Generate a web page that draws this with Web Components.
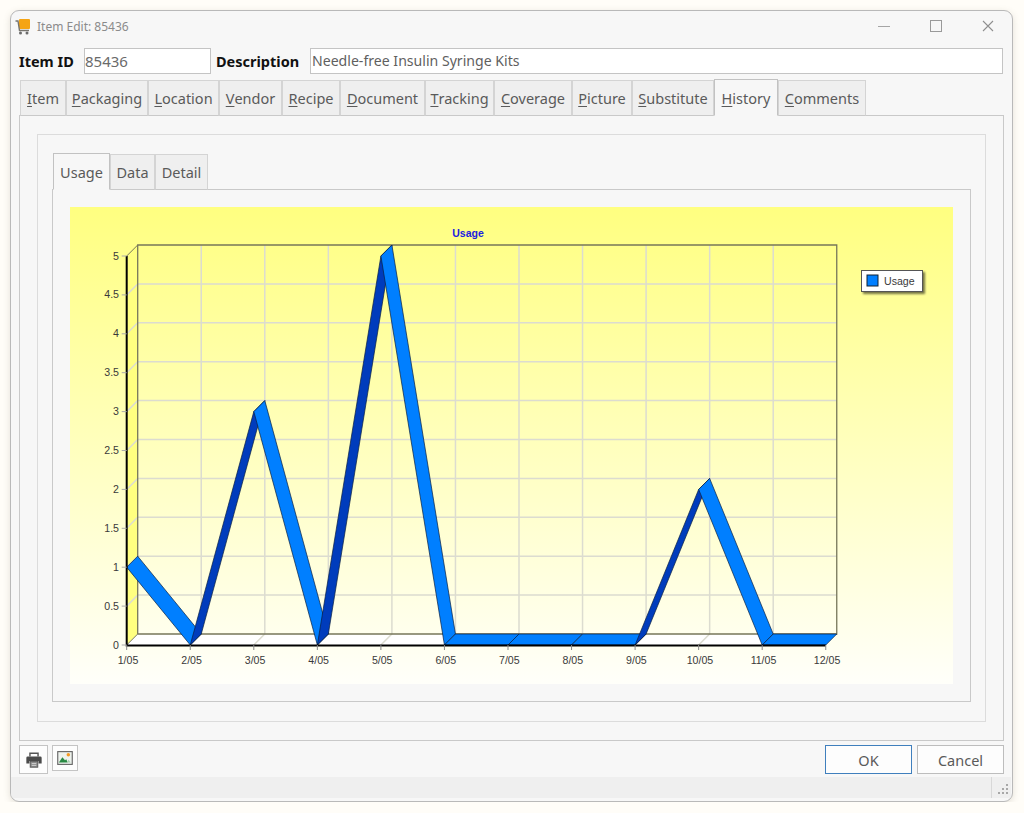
<!DOCTYPE html>
<html>
<head>
<meta charset="utf-8">
<title>Item Edit: 85436</title>
<style>
	html,body{ margin:0; background:#fffdf8; }
	body{ padding:10px 0 0 10px; font-family:"Noto Sans","Open Sans",sans-serif; }
	u{ text-underline-offset:2px; text-decoration-thickness:1px; }
</style>
</head>
<body>
<item-window>
	<win-titlebar slot="title">Item Edit: 85436</win-titlebar>

	<item-header id-value="85436" desc="Needle-free Insulin Syringe Kits"></item-header>

	<tab-strip style="--ml:1px">
		<tab-item style="--w:46px"><u>I</u>tem</tab-item>
		<tab-item style="--w:82px"><u>P</u>ackaging</tab-item>
		<tab-item style="--w:71px"><u>L</u>ocation</tab-item>
		<tab-item style="--w:63px"><u>V</u>endor</tab-item>
		<tab-item style="--w:58px"><u>R</u>ecipe</tab-item>
		<tab-item style="--w:85px"><u>D</u>ocument</tab-item>
		<tab-item style="--w:69px"><u>T</u>racking</tab-item>
		<tab-item style="--w:78px"><u>C</u>overage</tab-item>
		<tab-item style="--w:60px"><u>P</u>icture</tab-item>
		<tab-item style="--w:82px"><u>S</u>ubstitute</tab-item>
		<tab-item style="--w:64px" active><u>H</u>istory</tab-item>
		<tab-item style="--w:88px"><u>C</u>omments</tab-item>
	</tab-strip>
	<tab-panel style="--pad:18px 17px; --h:626px; --bc:#c9c9c9">
		<group-box>
			<tab-strip style="--ml:1px">
				<tab-item style="--w:57px" active>Usage</tab-item>
				<tab-item style="--w:45px">Data</tab-item>
				<tab-item style="--w:53px">Detail</tab-item>
			</tab-strip>
			<tab-panel style="--pad:17px; --h:513px; --bc:#c9c9c9">
				<usage-chart></usage-chart>
			</tab-panel>
		</group-box>
	</tab-panel>

	<button-bar>
		<tool-button slot="tools" style="--w:29px;--h:29px">
			<svg width="18" height="18" viewBox="0 0 20 20">
				<path d="M5.500 6V2.500h9V6" fill="none" stroke="#555" stroke-width="1.600"/>
				<path d="M3 6h14a1.500 1.500 0 0 1 1.500 1.500V14H15v-3H5v3H1.500V7.500A1.500 1.500 0 0 1 3 6z" fill="#4a4a4a"/>
				<rect x="5.800" y="11.500" width="8.400" height="6.500" fill="#8c8c8c" stroke="#555" stroke-width="1"/>
				<path d="M7.500 14h5M7.500 16h5" stroke="#d8d8d8" stroke-width="1"/>
			</svg>
		</tool-button>
		<tool-button slot="tools" style="--w:26px;--h:26px">
			<svg width="16" height="14" viewBox="0 0 18 16">
				<rect x="0.700" y="0.700" width="16.600" height="14.600" fill="#eef3ee" stroke="#666" stroke-width="1.300"/>
				<circle cx="12.800" cy="4.300" r="2" fill="#f59a23"/>
				<path d="M2 13l4-6 3 3.500 1.500-1 1.500 3.500z" fill="#2a8a44"/>
				<path d="M11 13l2-3 2.500 3z" fill="#a9cfb0"/>
			</svg>
		</tool-button>
		<push-button slot="actions" primary>OK</push-button>
		<push-button slot="actions">Cancel</push-button>
	</button-bar>

	<status-bar></status-bar>
</item-window>

<script>
// helper so every element below only has to hand over its html
class Base extends HTMLElement{
	constructor(){
		super();
		this.attachShadow({mode:'open'}).innerHTML = this.constructor.html;
	}
}

class ItemWindow extends Base{
	static html = `
		<style>
			:host{
				display:flex;
				flex-direction:column;
				box-sizing:border-box;
				width:1003px;
				height:792px;
				padding:0 8px;
				background:#f7f7f7;
				border:1px solid #b9b9b9;
				border-radius:9px;
				box-shadow:0 2px 7px rgba(120,110,90,.2);
				overflow:hidden;
				color:#5a5a5a;
			}
		</style>
		<slot name="title"></slot>
		<slot></slot>`;
}
customElements.define('item-window', ItemWindow);

class WinTitlebar extends Base{
	static html = `
		<style>
			:host{
				display:flex;
				align-items:center;
				height:37px;
				margin:0 -8px;
				padding:0 0 6px 4px;
				box-sizing:border-box;
				font-size:12px;
				color:#8b8b8b;
			}
			.icon{ margin-right:6px; }
			.title{ flex:1; }
			.ctl{ display:flex; margin:-2px -2px 0 0; }
			.ctl span{ display:flex; width:52px; justify-content:center; align-items:center; }
		</style>
		<svg class="icon" width="16" height="17" viewBox="0 0 16 17">
			<rect x="4" y="1" width="11" height="10" rx="1" fill="#f5a414"/>
			<path d="M0.500 3H3l1.500 9.500H14" fill="none" stroke="#77756f" stroke-width="1.400"/>
			<circle cx="5.500" cy="15" r="1.500" fill="#6b6b6b"/>
			<circle cx="12" cy="15" r="1.500" fill="#6b6b6b"/>
		</svg>
		<span class="title"><slot></slot></span>
		<div class="ctl">
			<span><svg width="12" height="12"><path d="M0 6.500h12" stroke="#a5a5a5"/></svg></span>
			<span><svg width="12" height="12"><rect x=".5" y=".5" width="11" height="11" fill="none" stroke="#9a9a9a" stroke-width="1"/></svg></span>
			<span><svg width="12" height="12"><path d="M1 1l10 10M11 1L1 11" stroke="#8f8f8f" stroke-width="1.100"/></svg></span>
		</div>`;
}
customElements.define('win-titlebar', WinTitlebar);

class ItemHeader extends Base{
	static html = `
		<style>
			:host{
				display:flex;
				align-items:center;
				height:26px;
				margin-bottom:5px;
				font-size:14.500px;
			}
			b{ color:#111; font-weight:700; white-space:nowrap; flex:none; }
			.field{
				box-sizing:border-box;
				flex:none;
				height:26px;
				line-height:24px;
				padding-left:1px;
				background:#fff;
				border:1px solid #c4c4c4;
				color:#5f5f5f;
				font-size:14.100px;
				white-space:nowrap;
			}
			#l1{ width:65px; }
			#l2{ width:94px; }
			#id{ width:127px; margin-right:5px; padding-left:0; font-size:15px; color:#6a6a6a; }
			#desc{ width:693px; }
		</style>
		<b id="l1">Item ID</b><div class="field" id="id"></div>
		<b id="l2">Description</b><div class="field" id="desc"></div>`;
	connectedCallback(){
		this.shadowRoot.getElementById('id').textContent = this.getAttribute('id-value');
		this.shadowRoot.getElementById('desc').textContent = this.getAttribute('desc');
	}
}
customElements.define('item-header', ItemHeader);

class TabStrip extends Base{
	static html = `
		<style>
			:host{
				display:flex;
				align-items:flex-end;
				height:36px;
				margin-left:var(--ml,0);
				position:relative;
				z-index:1;
				font-size:14.500px;
			}
		</style>
		<slot></slot>`;
}
customElements.define('tab-strip', TabStrip);

class TabItem extends Base{
	static html = `
		<style>
			:host{
				display:flex;
				align-items:center;
				justify-content:center;
				box-sizing:border-box;
				flex:none;
				width:var(--w);
				height:36px;
				margin-bottom:-1px;
				background:#efefef;
				border:1px solid #d4d4d4;
				border-bottom-color:#c9c9c9;
				color:#5a5a5a;
				white-space:nowrap;
			}
			:host([active]){
				height:37px;
				background:#f7f7f7;
				border-color:#c2c2c2;
				border-bottom-color:#f7f7f7;
				position:relative;
				z-index:2;
			}
		</style>
		<slot></slot>`;
}
customElements.define('tab-item', TabItem);

class TabPanel extends Base{
	static html = `
		<style>
			:host{
				display:block;
				box-sizing:border-box;
				height:var(--h);
				padding:var(--pad);
				border:1px solid var(--bc);
				background:#f7f7f7;
			}
		</style>
		<slot></slot>`;
}
customElements.define('tab-panel', TabPanel);

class GroupBox extends Base{
	static html = `
		<style>
			:host{
				display:block;
				box-sizing:border-box;
				height:100%;
				padding:18px 14px 19px;
				border:1px solid #dcdcdc;
			}
		</style>
		<slot></slot>`;
}
customElements.define('group-box', GroupBox);

class UsageChart extends Base{
	static html = `
		<style>
			:host{ display:block; width:883px; height:477px; }
			svg{ display:block; }
			text{ font-family:"Liberation Sans",Arial,sans-serif; font-size:10.600px; fill:#3a3a3a; }
			.title{ font-weight:700; font-size:10.500px; fill:#2020e0; }
		</style>
		<svg width="883" height="477" viewBox="70 207 883 477"></svg>`;
	connectedCallback(){
		const data = [1,0,3,0,5,0,0,0,0,2,0,0];
		const labels = ['1/05','2/05','3/05','4/05','5/05','6/05','7/05','8/05','9/05','10/05','11/05','12/05'];
		const x0 = 126.700, dx = 63.550, y0 = 645, unit = 77.800, d = 11;
		const X = i => x0 + dx * i;
		const Y = v => y0 - unit * v;
		let s = `
			<defs>
				<linearGradient id="bg" x1="0" y1="0" x2="0" y2="1">
					<stop offset="0" stop-color="#ffff80"/>
					<stop offset="1" stop-color="#fffffa"/>
				</linearGradient>
				<filter id="sh" x="-20%" y="-20%" width="150%" height="170%">
					<feDropShadow dx="2" dy="2" stdDeviation="1" flood-color="#000" flood-opacity=".55"/>
				</filter>
			</defs>
			<rect x="70" y="207" width="883" height="477" fill="url(#bg)"/>
			<text class="title" x="468" y="237" text-anchor="middle">Usage</text>
			<polygon points="${x0},${y0} ${x0+d},${y0-d} ${x0+d},${Y(5)-d} ${x0},${Y(5)}" fill="#ffff80"/>
			<polygon points="${x0},${y0} ${x0+d},${y0-d} ${X(11)+d},${y0-d} ${X(11)},${y0}" fill="#fff"/>`;
		// grid on the walls
		for(let i = 1; i <= 10; i++){
			s += `<path d="M${X(i)} ${y0}l${d} ${-d}V${Y(5)-d}" fill="none" stroke="#dcdcd0" stroke-width="1.500"/>`;
		}
		for(let v = 0.5; v <= 4.5; v += 0.5){
			s += `<path d="M${x0} ${Y(v)}l${d} ${-d}H${X(11)+d}" fill="none" stroke="#dcdcd0" stroke-width="1.500"/>`;
		}
		s += `<path d="M${x0+d} ${y0-d}V${Y(5)-d}H${X(11)+d}V${y0-d}H${x0+d}" fill="none" stroke="#77775a" stroke-width="1.300"/>`;
		s += `<path d="M${x0} ${Y(5)}l${d} ${-d}" stroke="#77775a" fill="none"/>`;
		s += `<path d="M${x0} ${y0}l${d} ${-d}" stroke="#77775a" fill="none"/>`;
		// series ribbon
		for(let i = 0; i < 11; i++){
			const rising = data[i+1] > data[i];
			const ax = X(i), ay = Y(data[i]), bx = X(i+1), by = Y(data[i+1]);
			s += `<polygon points="${ax},${ay} ${bx},${by} ${bx+d},${by-d} ${ax+d},${ay-d}" fill="${rising ? '#003cbc' : '#007fff'}" stroke="#0a2040" stroke-width=".7" stroke-linejoin="round"/>`;
		}
		// front axes
		s += `<path d="M${x0} ${Y(5)}V${y0+.5}H${X(11)}" fill="none" stroke="#000" stroke-width="2"/>`;
		for(let v = 0; v <= 5; v += 0.5){
			s += `<path d="M${x0-5} ${Y(v)}h5" stroke="#aaa"/>`;
			s += `<text x="119" y="${Y(v)+3.500}" text-anchor="end">${v}</text>`;
		}
		labels.forEach((t,i) => {
			s += `<path d="M${X(i)} ${y0}v5" stroke="#888"/>`;
			s += `<text x="${X(i)+1.300}" y="664" text-anchor="middle">${t}</text>`;
		});
		// legend
		s += `<rect x="861.500" y="270.500" width="61" height="21" fill="#fff" stroke="#555" filter="url(#sh)"/>`;
		s += `<rect x="867" y="275" width="11" height="11" fill="#007fff" stroke="#123"/>`;
		s += `<text x="884" y="284.500">Usage</text>`;
		this.shadowRoot.querySelector('svg').innerHTML = s;
	}
}
customElements.define('usage-chart', UsageChart);

class ButtonBar extends Base{
	static html = `
		<style>
			:host{
				display:flex;
				align-items:flex-start;
				justify-content:space-between;
				height:29px;
				margin-top:4px;
			}
			div{ display:flex; gap:4px; align-items:flex-start; }
			.r{ gap:5px; }
		</style>
		<div><slot name="tools"></slot></div>
		<div class="r"><slot name="actions"></slot></div>`;
}
customElements.define('button-bar', ButtonBar);

class ToolButton extends Base{
	static html = `
		<style>
			:host{
				display:flex;
				align-items:center;
				justify-content:center;
				box-sizing:border-box;
				width:var(--w);
				height:var(--h);
				background:#fdfdfd;
				border:1px solid #c4c4c4;
			}
			::slotted(svg){ display:block; }
		</style>
		<slot></slot>`;
}
customElements.define('tool-button', ToolButton);

class PushButton extends Base{
	static html = `
		<style>
			:host{
				display:flex;
				align-items:center;
				justify-content:center;
				box-sizing:border-box;
				width:87px;
				height:29px;
				background:#fdfdfd;
				border:1px solid #bdbdbd;
				font-size:14.500px;
				color:#5a5a5a;
			}
			:host([primary]){ border-color:#3f7fbd; }
		</style>
		<slot></slot>`;
}
customElements.define('push-button', PushButton);

class StatusBar extends Base{
	static html = `
		<style>
			:host{
				display:flex;
				justify-content:flex-end;
				box-sizing:border-box;
				height:21px;
				margin:3px -7px 0 -8px;
				background:#efefef;
			}
			.grip{
				width:20px;
				display:flex;
				align-items:flex-end;
				border-left:1px solid #d8d8d8;
				padding:0 0 3px 5px;
				box-sizing:border-box;
			}
		</style>
		<div class="grip">
			<svg width="12" height="12" fill="#a8a8a8">
				<rect x="9" y="1" width="2" height="2"/>
				<rect x="5" y="5" width="2" height="2"/><rect x="9" y="5" width="2" height="2"/>
				<rect x="1" y="9" width="2" height="2"/><rect x="5" y="9" width="2" height="2"/><rect x="9" y="9" width="2" height="2"/>
			</svg>
		</div>`;
}
customElements.define('status-bar', StatusBar);
</script>
</body>
</html>
